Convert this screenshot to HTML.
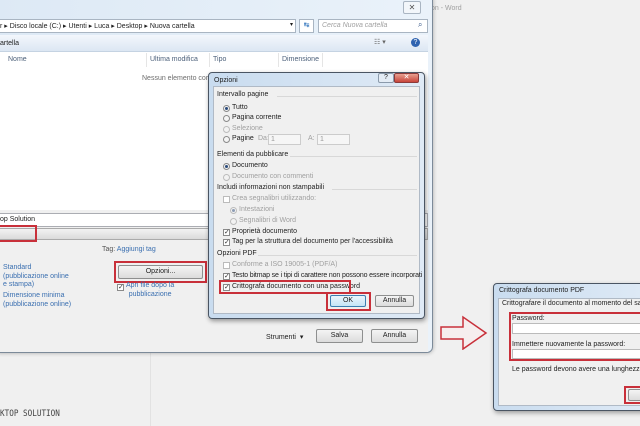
<!DOCTYPE html>
<html><head><meta charset="utf-8"><style>
*{margin:0;padding:0;box-sizing:border-box}
body{width:640px;height:426px;overflow:hidden;background:#f0f0f0;font-family:"Liberation Sans",sans-serif;font-size:7px;color:#1e1e1e;position:relative}
.a{position:absolute;white-space:nowrap}
.btn{position:absolute;border:1px solid #8e8f8f;border-radius:2px;background:linear-gradient(#f4f4f4,#dcdcdc);text-align:center;line-height:12px}
.red{position:absolute;border:2px solid #c8303a}
.rad{position:absolute;width:7px;height:7px;border-radius:50%;border:1px solid #8a8a8a;background:#f4f4f4}
.rad.on::after{content:"";position:absolute;left:1px;top:1px;width:3px;height:3px;border-radius:50%;background:#2a4a7a}
.cb{position:absolute;width:7px;height:7px;border:1px solid #8a8a8a;background:#fff;font-size:7px;line-height:6px;text-align:center;color:#333}
.g{color:#a0a0a0}
.h{position:absolute;height:1px;background:#d8d8d8}
.lnk{color:#3a6fb0}
</style></head><body>
<div class="a g" style="left:431px;top:5px;font-size:7px">on - Word</div>
<div class="a" style="left:150px;top:353px;width:1px;height:73px;background:#e2e2e2"></div>
<div class="a" style="left:0;top:409px;font-family:'DejaVu Sans Mono',monospace;font-size:9px;color:#444;transform:scaleX(0.85);transform-origin:left">KTOP SOLUTION</div>

<div class="a" style="left:-6px;top:-6px;width:439px;height:359px;border:1px solid #7c8a99;border-radius:6px;background:linear-gradient(90deg,#dde9f5,#eaf2fa);box-shadow:0 0 4px rgba(0,0,0,.3)"></div>
<div class="a" style="left:403px;top:1px;width:18px;height:13px;border:1px solid #a9b5c2;border-radius:2px;background:#f2f6fa;font-size:8px;text-align:center;line-height:11px;color:#555">✕</div>
<div class="a" style="left:0;top:19px;width:296px;height:14px;background:#fff;border:1px solid #a9b5c2;border-left:none"></div>
<div class="a" style="left:0;top:22px">r ▸ Disco locale (C:) ▸ Utenti ▸ Luca ▸ Desktop ▸ Nuova cartella</div>
<div class="a" style="left:290px;top:21px;font-size:6px">▾</div>
<div class="a" style="left:299px;top:19px;width:15px;height:14px;border:1px solid #a9b5c2;background:#fff;font-size:7px;color:#3a7bc0;text-align:center;line-height:12px">↹</div>
<div class="a" style="left:318px;top:19px;width:110px;height:14px;border:1px solid #a9b5c2;background:#fff"></div>
<div class="a g" style="left:322px;top:22px;font-style:italic">Cerca Nuova cartella</div>
<div class="a" style="left:418px;top:20px;font-size:8px;color:#3a5a8a">⌕</div>
<div class="a" style="left:0;top:35px;width:428px;height:17px;background:linear-gradient(#f3f7fc,#dce7f3);border-bottom:1px solid #c5d3e2"></div>
<div class="a" style="left:0;top:40px">artella</div>
<div class="a" style="left:374px;top:38px;color:#666">☷ ▾</div>
<div class="a" style="left:411px;top:38px;width:9px;height:9px;border-radius:50%;background:#2f63b0;color:#fff;font-size:7px;text-align:center;line-height:9px">?</div>
<div class="a" style="left:0;top:52px;width:428px;height:158px;background:#fff"></div>
<div class="a" style="left:8px;top:56px;color:#4c607a">Nome</div>
<div class="a" style="left:150px;top:56px;color:#4c607a">Ultima modifica</div>
<div class="a" style="left:213px;top:56px;color:#4c607a">Tipo</div>
<div class="a" style="left:282px;top:56px;color:#4c607a">Dimensione</div>
<div class="a" style="left:146px;top:53px;width:1px;height:14px;background:#e5e5e5"></div>
<div class="a" style="left:209px;top:53px;width:1px;height:14px;background:#e5e5e5"></div>
<div class="a" style="left:278px;top:53px;width:1px;height:14px;background:#e5e5e5"></div>
<div class="a" style="left:322px;top:53px;width:1px;height:14px;background:#e5e5e5"></div>
<div class="a" style="left:142px;top:75px;color:#6d6d6d">Nessun elemento corr</div>
<div class="a" style="left:0;top:210px;width:428px;height:142px;background:#f0f0f0"></div>
<div class="a" style="left:0;top:213px;width:428px;height:14px;background:#fff;border:1px solid #abadb3;border-left:none"></div>
<div class="a" style="left:0;top:216px">op Solution</div>
<div class="a" style="left:0;top:228px;width:428px;height:12px;background:linear-gradient(#f2f2f2,#dadada);border:1px solid #aaa;border-left:none"></div>
<div class="red" style="left:-2px;top:225px;width:39px;height:17px"></div>
<div class="a" style="left:102px;top:246px;color:#555">Tag: <span class="lnk">Aggiungi tag</span></div>
<div class="a lnk" style="left:3px;top:264px;line-height:8.5px">Standard<br>(pubblicazione online<br>e stampa)</div>
<div class="a lnk" style="left:3px;top:292px;line-height:8.5px">Dimensione minima<br>(pubblicazione online)</div>
<div class="btn" style="left:118px;top:265px;width:85px;height:14px">Opzioni...</div>
<div class="red" style="left:114px;top:261px;width:93px;height:22px"></div>
<div class="cb" style="left:117px;top:284px">✓</div>
<div class="a lnk" style="left:126px;top:282px;line-height:8.5px;text-align:center">Apri file dopo la<br>pubblicazione</div>
<div class="a" style="left:266px;top:333px">Strumenti &nbsp;▾</div>
<div class="btn" style="left:316px;top:329px;width:47px;height:14px">Salva</div>
<div class="btn" style="left:371px;top:329px;width:47px;height:14px">Annulla</div>

<div class="a" style="left:208px;top:72px;width:217px;height:247px;border:1px solid #4a5563;border-radius:4px;background:linear-gradient(90deg,#c9dcef,#dfeaf6);box-shadow:1px 2px 5px rgba(0,0,0,.4)"></div>
<div class="a" style="left:214px;top:77px">Opzioni</div>
<div class="a" style="left:378px;top:73px;width:16px;height:10px;border:1px solid #8b9aab;border-radius:2px;background:#e4ecf5;font-size:7px;text-align:center;line-height:8px">?</div>
<div class="a" style="left:394px;top:73px;width:25px;height:10px;border:1px solid #8b3a3a;border-radius:2px;background:linear-gradient(#e8a090,#c8443a);color:#fff;font-size:7px;text-align:center;line-height:8px">✕</div>
<div class="a" style="left:213px;top:86px;width:207px;height:228px;background:#f0f0f0;border:1px solid #b0bac6"></div>
<div class="a" style="left:217px;top:91px">Intervallo pagine</div><div class="h" style="left:277px;top:96px;width:140px"></div>
<div class="rad on" style="left:223px;top:105px"></div><div class="a" style="left:232px;top:104px">Tutto</div>
<div class="rad" style="left:223px;top:115px"></div><div class="a" style="left:232px;top:114px">Pagina corrente</div>
<div class="rad" style="left:223px;top:126px;opacity:.5"></div><div class="a g" style="left:232px;top:125px">Selezione</div>
<div class="rad" style="left:223px;top:136px"></div><div class="a" style="left:232px;top:135px">Pagine</div>
<div class="a g" style="left:258px;top:135px">Da:</div>
<div class="a" style="left:268px;top:134px;width:33px;height:11px;border:1px solid #ccc;background:#f6f6f6;color:#999;padding-left:2px;line-height:9px">1</div>
<div class="a g" style="left:308px;top:135px">A:</div>
<div class="a" style="left:317px;top:134px;width:33px;height:11px;border:1px solid #ccc;background:#f6f6f6;color:#999;padding-left:2px;line-height:9px">1</div>
<div class="a" style="left:217px;top:151px">Elementi da pubblicare</div><div class="h" style="left:290px;top:156px;width:127px"></div>
<div class="rad on" style="left:223px;top:163px"></div><div class="a" style="left:232px;top:162px">Documento</div>
<div class="rad" style="left:223px;top:174px;opacity:.5"></div><div class="a g" style="left:232px;top:173px">Documento con commenti</div>
<div class="a" style="left:217px;top:184px">Includi informazioni non stampabili</div><div class="h" style="left:332px;top:189px;width:85px"></div>
<div class="cb" style="left:223px;top:196px;border-color:#bbb"></div><div class="a g" style="left:232px;top:195px">Crea segnalibri utilizzando:</div>
<div class="rad on" style="left:230px;top:207px;opacity:.5"></div><div class="a g" style="left:239px;top:206px">Intestazioni</div>
<div class="rad" style="left:230px;top:218px;opacity:.5"></div><div class="a g" style="left:239px;top:217px">Segnalibri di Word</div>
<div class="cb" style="left:223px;top:229px">✓</div><div class="a" style="left:232px;top:228px">Proprietà documento</div>
<div class="cb" style="left:223px;top:239px">✓</div><div class="a" style="left:232px;top:238px">Tag per la struttura del documento per l'accessibilità</div>
<div class="a" style="left:217px;top:250px">Opzioni PDF</div><div class="h" style="left:258px;top:255px;width:159px"></div>
<div class="cb" style="left:223px;top:262px;border-color:#bbb"></div><div class="a g" style="left:232px;top:261px">Conforme a ISO 19005-1 (PDF/A)</div>
<div class="cb" style="left:223px;top:273px">✓</div><div class="a" style="left:232px;top:272px;letter-spacing:-0.15px">Testo bitmap se i tipi di carattere non possono essere incorporati</div>
<div class="cb" style="left:223px;top:284px">✓</div><div class="a" style="left:232px;top:283px">Crittografa documento con una password</div>
<div class="red" style="left:219px;top:280px;width:132px;height:14px"></div>
<div class="btn" style="left:330px;top:295px;width:36px;height:12px;border-color:#3c7fb1;background:linear-gradient(#eaf6fd,#c4e5f6);line-height:10px">OK</div>
<div class="red" style="left:326px;top:292px;width:45px;height:19px"></div>
<div class="btn" style="left:375px;top:295px;width:39px;height:12px;line-height:10px">Annulla</div>

<svg class="a" style="left:438px;top:314px" width="52" height="36"><path d="M3 13 H25 V3 L48 19 L25 35 V25 H3 Z" fill="#f6eeee" stroke="#c8303a" stroke-width="1.5"/></svg>

<div class="a" style="left:493px;top:283px;width:160px;height:128px;border:1px solid #4a5563;border-radius:4px;background:linear-gradient(90deg,#c9dcef,#dfeaf6);box-shadow:1px 2px 5px rgba(0,0,0,.35)"></div>
<div class="a" style="left:499px;top:287px">Crittografa documento PDF</div>
<div class="a" style="left:498px;top:298px;width:150px;height:108px;background:#f0f0f0;border:1px solid #b0bac6"></div>
<div class="a" style="left:502px;top:300px">Crittografare il documento al momento del salvat</div>
<div class="a" style="left:512px;top:315px">Password:</div>
<div class="a" style="left:512px;top:323px;width:130px;height:11px;background:#fff;border:1px solid #bbb"></div>
<div class="a" style="left:512px;top:341px">Immettere nuovamente la password:</div>
<div class="a" style="left:512px;top:349px;width:130px;height:10px;background:#fff;border:1px solid #bbb"></div>
<div class="red" style="left:509px;top:312px;width:140px;height:49px"></div>
<div class="a" style="left:512px;top:366px">Le password devono avere una lunghezza con</div>
<div class="btn" style="left:628px;top:389px;width:20px;height:12px"></div>
<div class="red" style="left:624px;top:386px;width:26px;height:18px"></div>
</body></html>
